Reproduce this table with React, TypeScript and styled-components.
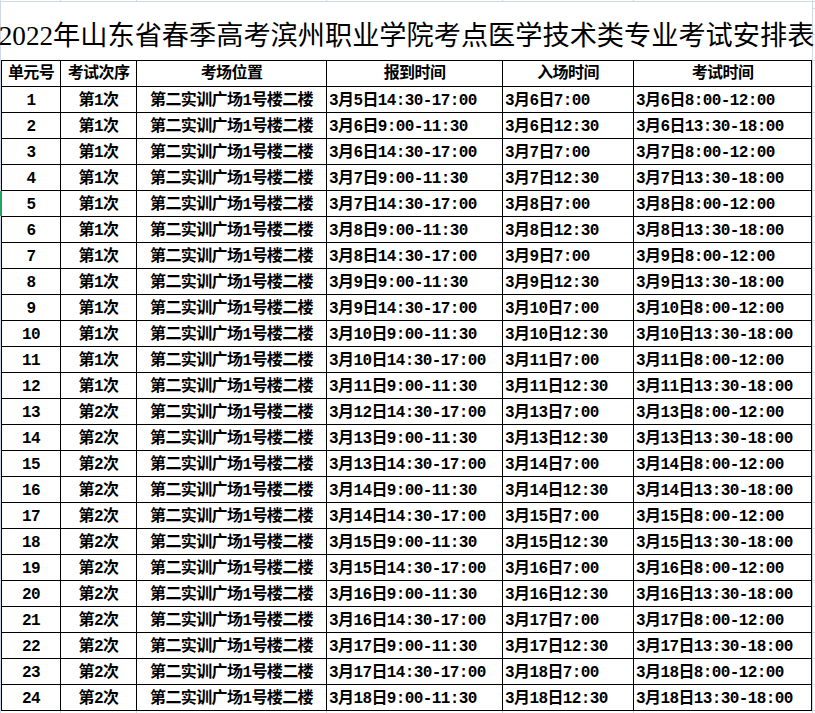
import {FC} from 'react'
import styled, {createGlobalStyle} from 'styled-components'

const grid = '#d0d7e5'

const GlobalStyle = createGlobalStyle`
  html, body {
    margin: 0;
    padding: 0;
    background: #ffffff;
  }
`

const vline = (x: number) => `linear-gradient(${grid}, ${grid}) ${x}px 0 / 1px 100% no-repeat`

const Page = styled.div`
  position: relative;
  width: 815px;
  height: 713px;
  overflow: hidden;
  box-sizing: border-box;
  padding: 2px 0 0 1px;
  background:
    ${vline(0)},
    ${vline(60)},
    ${vline(136)},
    ${vline(326)},
    ${vline(502)},
    ${vline(633)},
    ${vline(812)},
    linear-gradient(${grid}, ${grid}) 0 1px / 100% 1px no-repeat,
    repeating-linear-gradient(to bottom, ${grid} 0 1px, transparent 1px 26px) 0 8px / 100% 100%,
    #ffffff;
`

const RowMarker = styled.div`
  position: absolute;
  left: 0;
  top: 191px;
  width: 2px;
  height: 25px;
  background: #21a366;
`

const Title = styled.div`
  width: 811px;
  height: 58px;
  background: #ffffff;
  display: flex;
  align-items: center;
  justify-content: center;
  font-family: "Liberation Serif", "Noto Sans CJK SC", serif;
  font-size: 27.2px;
  font-weight: 400;
  color: #000000;
  white-space: nowrap;
  padding-top: 3px;
  box-sizing: border-box;
`

const Sheet = styled.table`
  border-collapse: collapse;
  table-layout: fixed;
  width: 811px;
  background: #ffffff;
  font-family: "Liberation Mono", "Noto Sans CJK SC", monospace;
  font-weight: 700;
  font-size: 16px;
  letter-spacing: -0.6px;
  color: #000000;
`

const Row = styled.tr`
  height: 26px;
`

const HeadCell = styled.th`
  border: 1px solid #000000;
  padding: 2px 0 0 0;
  text-align: center;
  font-weight: 700;
  white-space: nowrap;
  line-height: 23px;
`

const Cell = styled.td<{$left?: boolean}>`
  border: 1px solid #000000;
  padding: ${({$left}) => $left ? '3px 0 0 2px' : '3px 0 0 0'};
  text-align: ${({$left}) => $left ? 'left' : 'center'};
  white-space: nowrap;
  overflow: hidden;
  line-height: 22px;
`

const widths = [59, 76, 190, 176, 131, 178]
const heads = ['单元号', '考试次序', '考场位置', '报到时间', '入场时间', '考试时间']

type Item = {no: number, round: string, place: string, report: string, enter: string, exam: string}

const rows: Item[] = Array.from({length: 24}, (_, k) => {
  const i = k + 1
  const odd = i % 2 === 1
  const shift = i >= 13 ? 1 : 0
  const reportDay = 5 + Math.floor(i / 2) + shift
  const day = 6 + Math.floor((i - 1) / 2) + shift
  return {
    no: i,
    round: i <= 12 ? '第1次' : '第2次',
    place: '第二实训广场1号楼二楼',
    report: `3月${reportDay}日${odd ? '14:30-17:00' : '9:00-11:30'}`,
    enter: `3月${day}日${odd ? '7:00' : '12:30'}`,
    exam: `3月${day}日${odd ? '8:00-12:00' : '13:30-18:00'}`,
  }
})

const App: FC = () => (
  <Page>
    <GlobalStyle />
    <RowMarker />
    <Title>2022年山东省春季高考滨州职业学院考点医学技术类专业考试安排表</Title>
    <Sheet>
      <colgroup>
        {widths.map((w, i) => <col key={i} style={{width: w}} />)}
      </colgroup>
      <thead>
        <Row>
          {heads.map(h => <HeadCell key={h}>{h}</HeadCell>)}
        </Row>
      </thead>
      <tbody>
        {rows.map(r => (
          <Row key={r.no}>
            <Cell>{r.no}</Cell>
            <Cell>{r.round}</Cell>
            <Cell>{r.place}</Cell>
            <Cell $left>{r.report}</Cell>
            <Cell $left>{r.enter}</Cell>
            <Cell $left>{r.exam}</Cell>
          </Row>
        ))}
      </tbody>
    </Sheet>
  </Page>
)

export default App
